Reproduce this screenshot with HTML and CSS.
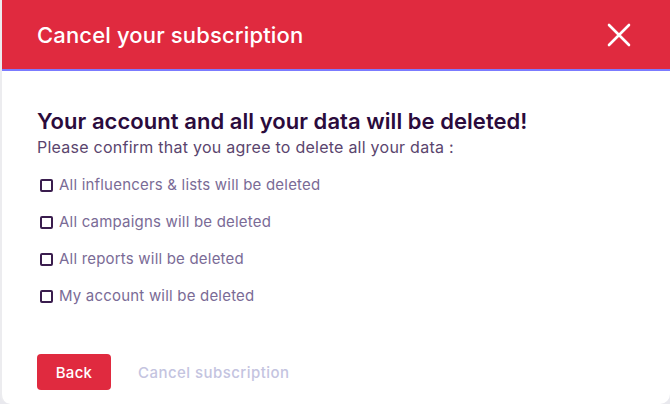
FILE: index.html
```html
<!DOCTYPE html>
<html lang="en">
<head>
<meta charset="utf-8">
<title>Cancel your subscription</title>
<link rel="stylesheet" href="styles.css">
</head>
<body>
<div class="modal">
  <header class="modal-header">
    <h1 class="modal-title">Cancel your subscription</h1>
    <button class="close-btn" aria-label="Close">
      <svg width="24" height="24" viewBox="0 0 24 24"><path d="M2 2 L22 22 M22 2 L2 22" stroke="#fff" stroke-width="2.6" stroke-linecap="round" fill="none"/></svg>
    </button>
  </header>
  <section class="modal-body">
    <h2 class="warning">Your account and all your data will be deleted!</h2>
    <p class="confirm">Please confirm that you agree to delete all your data :</p>
    <ul class="checklist">
      <li class="check-item"><span class="box"></span>All influencers &amp; lists will be deleted</li>
      <li class="check-item"><span class="box"></span>All campaigns will be deleted</li>
      <li class="check-item"><span class="box"></span>All reports will be deleted</li>
      <li class="check-item"><span class="box"></span>My account will be deleted</li>
    </ul>
    <div class="actions">
      <button class="btn-back">Back</button>
      <button class="btn-cancel">Cancel subscription</button>
    </div>
  </section>
</div>
</body>
</html>
```
FILE: styles.css
```css
* { box-sizing: border-box; }
html, body { margin: 0; padding: 0; }
body {
  width: 670px;
  height: 404px;
  background: #e9e9ee;
  font-family: Inter, "Noto Sans", sans-serif;
  overflow: hidden;
}
.modal {
  height: 404px;
  background: #fff;
  border-radius: 0 0 10px 10px;
  border-left: 2px solid #ececef;
  display: flex;
  flex-direction: column;
  overflow: hidden;
}
.modal-header {
  height: 71px;
  background: #e02a3f;
  border-bottom: 2px solid #7b7bff;
  box-shadow: -2px 0 0 #7b7bff;
  display: flex;
  align-items: center;
  justify-content: space-between;
  padding: 0 39px 0 35px;
  flex: none;
}
.modal-title {
  margin: 0;
  color: #fff;
  font-size: 22px;
  font-weight: 500;
  letter-spacing: 0.15px;
}
.close-btn {
  background: none;
  border: 0;
  padding: 0;
  width: 24px;
  height: 24px;
  display: flex;
}
.modal-body {
  padding: 35px 35px 0;
  flex: 1;
}
.warning {
  margin: 0;
  color: #2b0b3c;
  font-size: 22px;
  font-weight: 600;
  line-height: 30px;
  letter-spacing: 0.05px;
}
.confirm {
  margin: 0;
  color: #5a456e;
  font-size: 16px;
  line-height: 22px;
  letter-spacing: 0.25px;
}
.checklist {
  list-style: none;
  margin: 16px 0 0;
  padding: 0;
  display: flex;
  flex-direction: column;
  gap: 15px;
}
.check-item {
  display: flex;
  align-items: center;
  gap: 6px;
  color: #7a6b96;
  font-size: 15px;
  line-height: 22px;
  letter-spacing: 0.2px;
  padding-left: 3px;
}
.box {
  width: 13px;
  height: 13px;
  border: 2px solid #3a1d4e;
  border-radius: 2px;
  flex: none;
}
.actions {
  display: flex;
  align-items: center;
  gap: 27px;
  margin-top: 47px;
}
.btn-back {
  width: 74px;
  height: 36px;
  background: #e02a3f;
  color: #fff;
  border: 0;
  border-radius: 4px;
  font-family: inherit;
  font-size: 15px;
  font-weight: 500;
  letter-spacing: 0.3px;
}
.btn-cancel {
  background: none;
  border: 0;
  padding: 0;
  color: #c4c4df;
  font-family: inherit;
  font-size: 15px;
  font-weight: 500;
  letter-spacing: 0.45px;
}
```
